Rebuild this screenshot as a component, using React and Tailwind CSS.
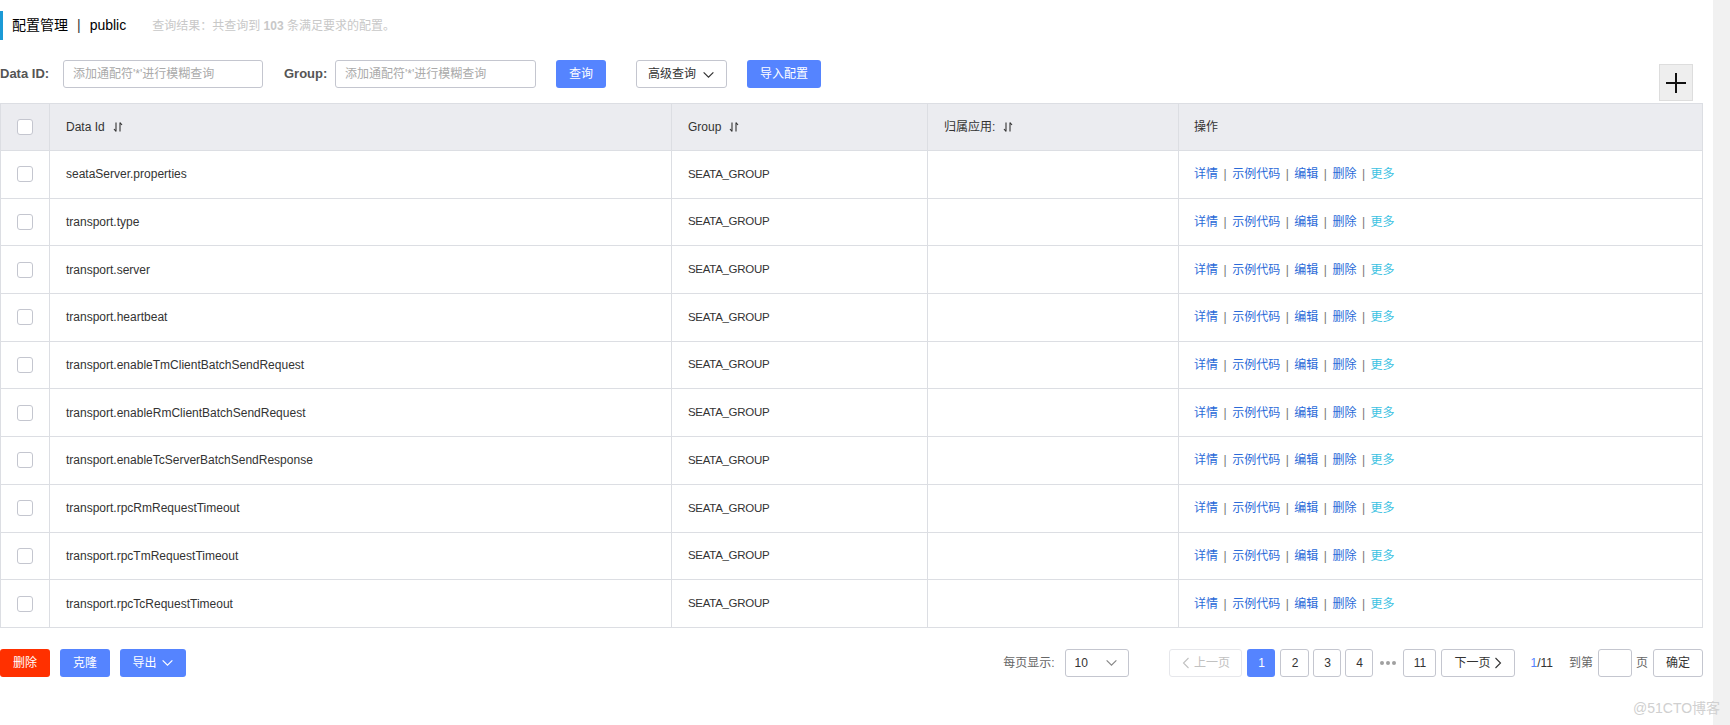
import React from "react";

const rows = [
  "seataServer.properties",
  "transport.type",
  "transport.server",
  "transport.heartbeat",
  "transport.enableTmClientBatchSendRequest",
  "transport.enableRmClientBatchSendRequest",
  "transport.enableTcServerBatchSendResponse",
  "transport.rpcRmRequestTimeout",
  "transport.rpcTmRequestTimeout",
  "transport.rpcTcRequestTimeout",
];

const SortIcon = () => (
  <svg width="10" height="12" viewBox="0 0 10 12" className="ml-[8px]">
    <path d="M3 1.5V10.5M3 10.5L1 8" stroke="#333" strokeWidth="1.1" fill="none" />
    <path d="M7 10.5V1.5M7 1.5L9 4" stroke="#333" strokeWidth="1.1" fill="none" />
  </svg>
);

const Chevron = ({ color = "#333", size = 12 }) => (
  <svg width={size} height={size} viewBox="0 0 12 12">
    <path d="M1.5 4L6 8.5L10.5 4" stroke={color} strokeWidth="1.1" fill="none" />
  </svg>
);

const Checkbox = () => (
  <div className="w-[16px] h-[16px] rounded-[3px] border border-[#c4c6cf] bg-white" />
);

const Ops = () => (
  <div className="flex items-center text-[12px]">
    <span className="text-[#2a6ad8]">详情</span>
    <span className="mx-[5.5px] text-[#777]">|</span>
    <span className="text-[#2a6ad8]">示例代码</span>
    <span className="mx-[5.5px] text-[#777]">|</span>
    <span className="text-[#2a6ad8]">编辑</span>
    <span className="mx-[5.5px] text-[#777]">|</span>
    <span className="text-[#2a6ad8]">删除</span>
    <span className="mx-[5.5px] text-[#777]">|</span>
    <span className="text-[#3cc2e2]">更多</span>
  </div>
);

const PageBtn = ({ children, className = "" }) => (
  <div
    className={`h-[28px] flex items-center justify-center rounded-[3px] border border-[#c4c6cf] bg-white text-[12px] text-[#333] ${className}`}>
    {children}
  </div>
);

export default function App() {
  return (
    <div
      className="flex w-[1730px] h-[725px] bg-white text-[#333] overflow-hidden"
      style={{ fontFamily: '"Liberation Sans", "Noto Sans CJK SC", sans-serif' }}>
      <div className="relative w-[1713px] h-full">
        {/* 标题 */}
        <div className="mt-[11px] h-[29px] border-l-[3px] border-[#1b9ad6] pl-[9px] flex items-center">
          <span className="text-[14px] text-black">配置管理</span>
          <span className="text-[14px] text-[#333] mx-[9px]">|</span>
          <span className="text-[14px] text-black">public</span>
          <span className="ml-[26px] text-[12px] text-[#c8c8c8]">
            查询结果：共查询到 <b>103</b> 条满足要求的配置。
          </span>
        </div>

        {/* 搜索栏 */}
        <div className="mt-[20px] h-[28px] flex items-center">
          <span className="w-[50px] text-[13px] font-bold text-[#555]">Data ID:</span>
          <div className="ml-[13px] w-[200px] h-[28px] rounded-[3px] border border-[#c4c6cf] flex items-center pl-[9px] text-[12px] text-[#aaa]">
            添加通配符'*'进行模糊查询
          </div>
          <span className="ml-[21px] w-[39px] text-[13px] font-bold text-[#555]">Group:</span>
          <div className="ml-[12px] w-[201px] h-[28px] rounded-[3px] border border-[#c4c6cf] flex items-center pl-[9px] text-[12px] text-[#aaa]">
            添加通配符'*'进行模糊查询
          </div>
          <div className="ml-[20px] w-[50px] h-[28px] rounded-[3px] bg-[#5584ff] text-white text-[12px] flex items-center justify-center">
            查询
          </div>
          <div className="ml-[30px] w-[91px] h-[28px] rounded-[3px] border border-[#c4c6cf] bg-white text-[12px] text-[#333] flex items-center justify-center gap-[6px]">
            高级查询
            <Chevron size={13} />
          </div>
          <div className="ml-[20px] w-[74px] h-[28px] rounded-[3px] bg-[#5584ff] text-white text-[12px] flex items-center justify-center">
            导入配置
          </div>
        </div>

        <div className="absolute left-[1659px] top-[64px] w-[34px] h-[37px] bg-[#eeeeee] border border-[#dddddd] flex items-center justify-center">
          <svg width="20" height="20" viewBox="0 0 20 20">
            <path d="M10 0V20M0 10H20" stroke="#111" strokeWidth="2" />
          </svg>
        </div>

        {/* 表格 */}
        <div className="mt-[15px] w-[1703px] border border-[#dcdee3] border-b-0">
          <div className="grid grid-cols-[49px_622px_256px_251px_1fr] h-[47px] bg-[#ebecf0] border-b border-[#dcdee3] text-[12px]">
            <div className="flex items-center justify-center border-r border-[#dcdee3]">
              <Checkbox />
            </div>
            <div className="flex items-center pl-[16px] border-r border-[#dcdee3]">
              Data Id
              <SortIcon />
            </div>
            <div className="flex items-center pl-[16px] border-r border-[#dcdee3]">
              Group
              <SortIcon />
            </div>
            <div className="flex items-center pl-[16px] border-r border-[#dcdee3]">
              归属应用:
              <SortIcon />
            </div>
            <div className="flex items-center pl-[15px]">操作</div>
          </div>
          {rows.map((id) => (
            <div
              key={id}
              className="grid grid-cols-[49px_622px_256px_251px_1fr] h-[47.7px] border-b border-[#dcdee3] text-[12px]">
              <div className="flex items-center justify-center border-r border-[#dcdee3]">
                <Checkbox />
              </div>
              <div className="flex items-center pl-[16px] border-r border-[#dcdee3]">{id}</div>
              <div className="flex items-center pl-[16px] border-r border-[#dcdee3] text-[11.5px] tracking-[-0.3px]">
                SEATA_GROUP
              </div>
              <div className="border-r border-[#dcdee3]" />
              <div className="flex items-center pl-[15px]">
                <Ops />
              </div>
            </div>
          ))}
        </div>

        {/* 底部 */}
        <div className="mt-[21px] w-[1703px] h-[28px] flex items-center">
          <div className="w-[50px] h-[28px] rounded-[3px] bg-[#ff3000] text-white text-[12px] flex items-center justify-center">
            删除
          </div>
          <div className="ml-[10px] w-[50px] h-[28px] rounded-[3px] bg-[#5584ff] text-white text-[12px] flex items-center justify-center">
            克隆
          </div>
          <div className="ml-[10px] w-[66px] h-[28px] rounded-[3px] bg-[#5584ff] text-white text-[12px] flex items-center justify-center gap-[4px]">
            导出
            <Chevron color="#fff" size={13} />
          </div>

          <div className="ml-auto flex items-center">
            <span className="text-[12px] text-[#666]">每页显示:</span>
            <div className="ml-[11px] w-[64px] h-[28px] rounded-[3px] border border-[#c4c6cf] flex items-center justify-between pl-[8px] pr-[10px] text-[12px]">
              10
              <Chevron color="#888" size={13} />
            </div>
            <PageBtn className="ml-[40px] w-[73px] bg-[#f7f8fa] border-[#e6e7eb] text-[#c1c1c1] gap-[4px]">
              <svg width="8" height="12" viewBox="0 0 8 12">
                <path d="M6.5 1L1.5 6L6.5 11" stroke="#c1c1c1" strokeWidth="1.1" fill="none" />
              </svg>
              <span className="text-[#c1c1c1]">上一页</span>
            </PageBtn>
            <div className="ml-[5px] w-[28px] h-[28px] rounded-[3px] bg-[#5584ff] text-white text-[12px] flex items-center justify-center">
              1
            </div>
            <PageBtn className="ml-[5px] w-[29px]">2</PageBtn>
            <PageBtn className="ml-[4px] w-[28px]">3</PageBtn>
            <PageBtn className="ml-[4px] w-[28px]">4</PageBtn>
            <div className="mx-[7px] w-[16px] flex items-center justify-between">
              <span className="w-[4px] h-[4px] rounded-full bg-[#a0a0a0]" />
              <span className="w-[4px] h-[4px] rounded-full bg-[#a0a0a0]" />
              <span className="w-[4px] h-[4px] rounded-full bg-[#a0a0a0]" />
            </div>
            <PageBtn className="w-[33px]">11</PageBtn>
            <PageBtn className="ml-[5px] w-[74px] gap-[4px]">
              下一页
              <svg width="8" height="12" viewBox="0 0 8 12">
                <path d="M1.5 1L6.5 6L1.5 11" stroke="#333" strokeWidth="1.1" fill="none" />
              </svg>
            </PageBtn>
            <span className="ml-[15px] text-[12px]">
              <span className="text-[#5584ff]">1</span>
              <span className="text-[#333]">/11</span>
            </span>
            <span className="ml-[16px] text-[12px] text-[#666]">到第</span>
            <div className="ml-[5px] w-[34px] h-[28px] rounded-[3px] border border-[#c4c6cf]" />
            <span className="ml-[4px] text-[12px] text-[#666]">页</span>
            <PageBtn className="ml-[5px] w-[50px]">确定</PageBtn>
          </div>
        </div>

        <div className="absolute left-[1633px] top-[698px] text-[14px] text-[#d0d0d0] whitespace-nowrap">
          @51CTO博客
        </div>
      </div>
      <div className="w-[17px] h-full bg-[#f1f1f1]" />
    </div>
  );
}
